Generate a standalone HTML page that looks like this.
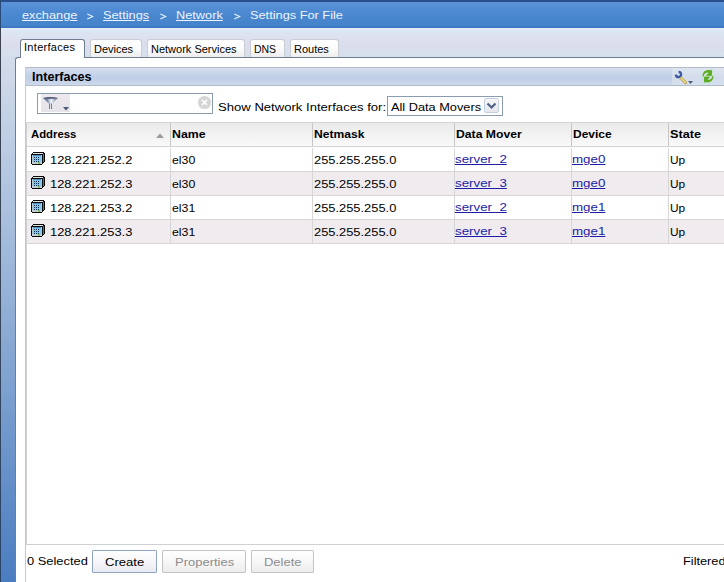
<!DOCTYPE html>
<html><head><meta charset="utf-8">
<style>
*{margin:0;padding:0;box-sizing:border-box}
html,body{width:724px;height:582px;overflow:hidden}
body{position:relative;font-family:"Liberation Sans",sans-serif;font-size:11px;color:#000;
 background:linear-gradient(to bottom,#e4ecf8 28px,#dce5f3 32px,#dcdded 44px,#d6e0ec 55px,#d2dcea 60px,#4a7dc0 582px)}
.abs{position:absolute}
.t{position:absolute;white-space:nowrap;line-height:14px}
.v{font-size:11px;transform-origin:0 0}
#lb{left:0;top:0;width:1px;height:582px;background:linear-gradient(to bottom,#2a4a78 0,#2a4a78 28px,#3c4250 28px,#38465a 300px,#2a4468 582px)}
#hdr{left:1px;top:0;width:723px;height:28px;background:linear-gradient(to bottom,#2a4f8c 0,#2a4f8c 2px,#5b93d9 2px,#4a88d0 14px,#4482ca 26px,#3d76bd 27px,#3d76bd 28px)}
.bc{color:#eef4ff}
.bc u{text-decoration:underline}
.tab{position:absolute;top:39px;height:19px;border:1px solid #c9cdd4;border-bottom:none;border-radius:3px 3px 0 0;
 background:linear-gradient(to bottom,#ffffff 0,#fbfbfb 50%,#ececec 100%);}
.tab span{position:absolute;left:3px;top:2px;line-height:14px;white-space:nowrap}
#outer{left:15px;top:57px;width:720px;height:540px;background:#fff;border:1px solid #6f7d90;border-right:none;border-bottom:none;border-top-left-radius:3px}
#acttab{left:20px;top:39px;width:65px;height:18px;background:#fff;border:1px solid #6f7d90;border-bottom:none;border-radius:3px 3px 0 0}
#panel{left:25px;top:67px;width:710px;height:530px;border-left:1px solid #c2c8ce;background:#fff}
#ph{left:25px;top:67px;width:699px;height:19px;border-top:1px solid #b3bdca;border-bottom:1px solid #b0bbca;border-left:1px solid #c6cfdc;border-top-left-radius:2px;
 background:linear-gradient(to bottom,#d6deed 0,#bfcfe7 55%,#c9d5ea 90%,#d0daec 100%)}
#tb{left:672px;top:68px;width:52px;height:17px;background:linear-gradient(to bottom,#dfe5f0 0,#d3dcec 55%,#d6dfee 100%)}
#grid{left:26px;top:122px;width:698px;height:423px;border-left:1px solid #d0d0d0;border-top:1px solid #d4d4d4;border-bottom:1px solid #d0d0d0}
#gh{left:27px;top:123px;width:697px;height:24px;background:linear-gradient(to bottom,#eaeaea 0,#f2f2f2 50%,#f9f9f9 100%);border-bottom:1px solid #d2d2d2}
.hs{position:absolute;top:123px;width:1px;height:23px;background:#c6c6c6}
.rs{position:absolute;width:1px;background:#d6d6d6}
.row{position:absolute;left:27px;width:697px;height:24px;border-bottom:1px solid #d6d6d6}
.alt{background:#efebef}
.hd{font-weight:bold;font-size:11px}
a{color:#1c1ca6;text-decoration:underline}
.btn{position:absolute;top:550px;height:23px;border:1px solid #8ea4bf;border-radius:1px;background:linear-gradient(to bottom,#ffffff 0,#f6f6fa 50%,#e9e9f1 100%)}
.btn.dis{border-color:#c4c4c4;background:linear-gradient(to bottom,#ffffff 0,#f7f7f7 50%,#ededed 100%)}
.btn.dis .t{color:#8d8d8d}
</style></head><body>
<div id="lb" class="abs"></div>
<div id="hdr" class="abs"></div>
<div class="t v" style="left:22px;top:8px;transform:scaleX(1.16);color:#eef4ff"><u>exchange</u></div>
<svg class="abs" style="left:87px;top:13px" width="7" height="7" viewBox="0 0 7 7"><path d="M0.3 1 L5.8 3.5 L0.3 6" fill="none" stroke="#eaf4ff" stroke-width="1.2"/></svg>
<div class="t v" style="left:103px;top:8px;transform:scaleX(1.16);color:#eef4ff"><u>Settings</u></div>
<svg class="abs" style="left:160px;top:13px" width="7" height="7" viewBox="0 0 7 7"><path d="M0.3 1 L5.8 3.5 L0.3 6" fill="none" stroke="#eaf4ff" stroke-width="1.2"/></svg>
<div class="t v" style="left:176px;top:8px;transform:scaleX(1.16);color:#eef4ff"><u>Network</u></div>
<svg class="abs" style="left:234px;top:13px" width="7" height="7" viewBox="0 0 7 7"><path d="M0.3 1 L5.8 3.5 L0.3 6" fill="none" stroke="#eaf4ff" stroke-width="1.2"/></svg>
<div class="t v" style="left:250px;top:8px;transform:scaleX(1.16);color:#eef4ff">Settings For File</div>
<div class="tab" style="left:90px;width:52px"><span style="transform:scaleX(1);transform-origin:0 0">Devices</span></div>
<div class="tab" style="left:147px;width:98px"><span style="transform:scaleX(1);transform-origin:0 0">Network Services</span></div>
<div class="tab" style="left:250px;width:35px"><span style="transform:scaleX(0.95);transform-origin:0 0">DNS</span></div>
<div class="tab" style="left:290px;width:49px"><span style="transform:scaleX(1);transform-origin:0 0">Routes</span></div>
<div id="outer" class="abs"></div>
<div id="acttab" class="abs"></div>
<div class="abs" style="left:21px;top:56px;width:63px;height:2px;background:#fff"></div>
<div class="t" style="left:24px;top:40px;letter-spacing:0.3px">Interfaces</div>
<div id="panel" class="abs"></div>
<div id="ph" class="abs"></div>
<div id="tb" class="abs"></div>
<div class="t" style="left:32px;top:70px;font-weight:bold;font-size:12px;transform:scaleX(1.05);transform-origin:0 0">Interfaces</div>
<svg class="abs" style="left:673px;top:68px" width="22" height="18" viewBox="0 0 22 18">
<path d="M2.9 6.6 A2.6 2.6 0 1 0 5.6 3.9" fill="none" stroke="#3d5ba2" stroke-width="2.3"/>
<path d="M8.2 10.2 L12.6 14.6" stroke="#b09a58" stroke-width="3" stroke-linecap="round"/>
<path d="M8.2 10.2 L12.6 14.6" stroke="#f2d472" stroke-width="1.7" stroke-linecap="round"/>
<path d="M15 13 L20 13 L17.5 16 Z" fill="#4c5f82"/>
</svg>
<svg class="abs" style="left:698px;top:66px" width="20" height="20" viewBox="0 0 20 20">
<g fill="#5aaa22" stroke="#b4e49a" stroke-width="0.9" stroke-opacity="0.8" paint-order="stroke"><path d="M4.66 10.57 L4.59 9.75 L4.65 8.92 L4.84 8.10 L5.15 7.30 L5.59 6.55 L6.14 5.87 L6.80 5.27 L7.55 4.78 L8.38 4.40 L9.27 4.14 L10.20 4.03 L11.15 4.06 L12.09 4.23 L13.00 4.55 L11.60 7.20 L11.15 6.92 L10.65 6.71 L10.12 6.58 L9.56 6.53 L8.99 6.56 L8.42 6.69 L7.86 6.91 L7.34 7.21 L6.86 7.60 L6.44 8.07 L6.09 8.61 L5.82 9.20 L5.64 9.84 L5.56 10.51 Z M13.90 3.50 L13.90 9.70 L7.90 9.70 Z"/><path d="M15.34 9.83 L15.41 10.65 L15.35 11.48 L15.16 12.30 L14.85 13.10 L14.41 13.85 L13.86 14.53 L13.20 15.13 L12.45 15.62 L11.62 16.00 L10.73 16.26 L9.80 16.37 L8.85 16.34 L7.91 16.17 L7.00 15.85 L8.40 13.20 L8.85 13.48 L9.35 13.69 L9.88 13.82 L10.44 13.87 L11.01 13.84 L11.58 13.71 L12.14 13.49 L12.66 13.19 L13.14 12.80 L13.56 12.33 L13.91 11.79 L14.18 11.20 L14.36 10.56 L14.44 9.89 Z M6.10 16.90 L6.10 10.70 L12.10 10.70 Z"/></g>
</svg>
<div class="abs" style="left:37px;top:93px;width:176px;height:21px;border:1px solid #8b9cae;background:#fff"></div>
<div class="abs" style="left:41px;top:94px;width:29px;height:18px;background:linear-gradient(to bottom,#ebe9ed,#e6e4e8)"></div>
<svg class="abs" style="left:42px;top:96px" width="18" height="14" viewBox="0 0 18 14">
 <defs><linearGradient id="fg" x1="0" x2="1"><stop offset="0" stop-color="#4a5a80"/><stop offset="0.3" stop-color="#8090b0"/><stop offset="0.55" stop-color="#f4f6fc"/><stop offset="0.85" stop-color="#8c98b0"/><stop offset="1" stop-color="#5a6684"/></linearGradient></defs>
 <path d="M1 1.8 L16 1.8 L10.2 7.8 L6.8 7.8 Z" fill="url(#fg)"/>
 <path d="M1 2.2 Q8.5 -0.4 16 2.2 Q8.5 3.4 1 2.2 Z" fill="#4c5474"/>
 <rect x="7" y="7.5" width="3" height="5.5" fill="#dfe3ea"/>
 <path d="M7.5 7.5 L7.5 13 M9.5 7.5 L9.5 13" stroke="#727e90" stroke-width="1"/>
</svg>
<svg class="abs" style="left:63px;top:107px" width="6" height="4" viewBox="0 0 6 4"><path d="M0 0 L6 0 L3 3.5 Z" fill="#4a5a7a"/></svg>
<svg class="abs" style="left:197px;top:95px" width="15" height="15" viewBox="0 0 15 15"><circle cx="7.5" cy="7.5" r="6.6" fill="#d6d6d6"/><path d="M5 5 L10 10 M10 5 L5 10" stroke="#fff" stroke-width="1.6"/></svg>
<div class="t v" style="left:218px;top:100px;transform:scaleX(1.19);">Show Network Interfaces for:</div>
<div class="abs" style="left:387px;top:96px;width:116px;height:20px;border:1px solid #8b9cae;background:#fff"></div>
<div class="t v" style="left:391px;top:100px;transform:scaleX(1.16);">All Data Movers</div>
<div class="abs" style="left:484px;top:98px;width:15px;height:15px;border:1px solid #c1cfe0;border-radius:2px;background:linear-gradient(to bottom,#f7f7fb,#e6e6ee)"></div>
<svg class="abs" style="left:486px;top:102px" width="11" height="8" viewBox="0 0 11 8"><path d="M1.5 1.5 L5.5 5.5 L9.5 1.5" stroke="#4d6185" stroke-width="2.2" fill="none"/></svg>
<div id="grid" class="abs"></div>
<div id="gh" class="abs"></div>
<div class="hs" style="left:170px"></div>
<div class="hs" style="left:312px"></div>
<div class="hs" style="left:454px"></div>
<div class="hs" style="left:571px"></div>
<div class="hs" style="left:668px"></div>
<div class="t hd" style="left:31px;top:127px;transform:scaleX(1.03);transform-origin:0 0">Address</div>
<div class="t hd" style="left:172px;top:127px;transform:scaleX(1.12);transform-origin:0 0">Name</div>
<div class="t hd" style="left:314px;top:127px;transform:scaleX(1.1);transform-origin:0 0">Netmask</div>
<div class="t hd" style="left:456px;top:127px;transform:scaleX(1.11);transform-origin:0 0">Data Mover</div>
<div class="t hd" style="left:573px;top:127px;transform:scaleX(1.09);transform-origin:0 0">Device</div>
<div class="t hd" style="left:670px;top:127px;transform:scaleX(1.15);transform-origin:0 0">State</div>
<svg class="abs" style="left:156px;top:133px" width="8" height="5" viewBox="0 0 8 5"><path d="M0 5 L4 0.5 L8 5 Z" fill="#9a9a9a"/></svg>
<svg width="0" height="0" style="position:absolute"><defs><symbol id="ico" viewBox="0 0 16 16" shape-rendering="crispEdges">
<rect x="3" y="2" width="11" height="1" fill="#0a0a0a"/>
<rect x="2" y="3" width="1" height="1" fill="#0a0a0a"/>
<rect x="3" y="3" width="10" height="1" fill="#e4e4e4"/>
<rect x="13" y="3" width="2" height="1" fill="#0a0a0a"/>
<rect x="1" y="4" width="12" height="1" fill="#0a0a0a"/>
<rect x="1" y="4" width="1" height="10" fill="#0a0a0a"/>
<rect x="2" y="14" width="10" height="1" fill="#0a0a0a"/>
<rect x="12" y="4" width="1" height="10" fill="#0a0a0a"/>
<rect x="13" y="4" width="1" height="8" fill="#6c6c6c"/>
<rect x="14" y="3" width="1" height="9" fill="#0a0a0a"/>
<rect x="13" y="12" width="1" height="1" fill="#0a0a0a"/>
<rect x="2" y="5" width="10" height="9" fill="#b4c8d4"/>
<rect x="3" y="5" width="8" height="7" fill="#86c4e8"/>
<rect x="3" y="5" width="8" height="1" fill="#4a8cc0"/>
<g fill="#0b2d4e"><rect x="4" y="7" width="1" height="1"/><rect x="6" y="7" width="1" height="1"/><rect x="8" y="7" width="1" height="1"/>
<rect x="4" y="9" width="1" height="1"/><rect x="6" y="9" width="1" height="1"/><rect x="8" y="9" width="1" height="1"/>
<rect x="4" y="11" width="1" height="1"/><rect x="6" y="11" width="1" height="1"/><rect x="8" y="11" width="1" height="1"/></g>
<rect x="2" y="12" width="10" height="2" fill="#c4ccd0"/>
<rect x="8" y="12" width="2" height="2" fill="#7cc46c"/>
</symbol></defs></svg>
<div class="row" style="top:148px"></div>
<div class="row alt" style="top:172px"></div>
<div class="row" style="top:196px"></div>
<div class="row alt" style="top:220px"></div>
<div class="rs" style="left:170px;top:148px;height:96px"></div>
<div class="rs" style="left:312px;top:148px;height:96px"></div>
<div class="rs" style="left:454px;top:148px;height:96px"></div>
<div class="rs" style="left:571px;top:148px;height:96px"></div>
<div class="rs" style="left:668px;top:148px;height:96px"></div>
<svg class="abs" style="left:30px;top:150px" width="16" height="16"><use href="#ico"/></svg>
<div class="t v" style="left:50px;top:153px;transform:scaleX(1.17);">128.221.252.2</div>
<div class="t v" style="left:172px;top:153px;transform:scaleX(1.12);">el30</div>
<div class="t v" style="left:314px;top:153px;transform:scaleX(1.17);">255.255.255.0</div>
<div class="t v" style="left:455px;top:152px;transform:scaleX(1.21);"><a>server_2</a></div>
<div class="t v" style="left:572px;top:152px;transform:scaleX(1.21);"><a>mge0</a></div>
<div class="t v" style="left:670px;top:153px;transform:scaleX(1.08);">Up</div>
<svg class="abs" style="left:30px;top:174px" width="16" height="16"><use href="#ico"/></svg>
<div class="t v" style="left:50px;top:177px;transform:scaleX(1.17);">128.221.252.3</div>
<div class="t v" style="left:172px;top:177px;transform:scaleX(1.12);">el30</div>
<div class="t v" style="left:314px;top:177px;transform:scaleX(1.17);">255.255.255.0</div>
<div class="t v" style="left:455px;top:176px;transform:scaleX(1.21);"><a>server_3</a></div>
<div class="t v" style="left:572px;top:176px;transform:scaleX(1.21);"><a>mge0</a></div>
<div class="t v" style="left:670px;top:177px;transform:scaleX(1.08);">Up</div>
<svg class="abs" style="left:30px;top:198px" width="16" height="16"><use href="#ico"/></svg>
<div class="t v" style="left:50px;top:201px;transform:scaleX(1.17);">128.221.253.2</div>
<div class="t v" style="left:172px;top:201px;transform:scaleX(1.12);">el31</div>
<div class="t v" style="left:314px;top:201px;transform:scaleX(1.17);">255.255.255.0</div>
<div class="t v" style="left:455px;top:200px;transform:scaleX(1.21);"><a>server_2</a></div>
<div class="t v" style="left:572px;top:200px;transform:scaleX(1.21);"><a>mge1</a></div>
<div class="t v" style="left:670px;top:201px;transform:scaleX(1.08);">Up</div>
<svg class="abs" style="left:30px;top:222px" width="16" height="16"><use href="#ico"/></svg>
<div class="t v" style="left:50px;top:225px;transform:scaleX(1.17);">128.221.253.3</div>
<div class="t v" style="left:172px;top:225px;transform:scaleX(1.12);">el31</div>
<div class="t v" style="left:314px;top:225px;transform:scaleX(1.17);">255.255.255.0</div>
<div class="t v" style="left:455px;top:224px;transform:scaleX(1.21);"><a>server_3</a></div>
<div class="t v" style="left:572px;top:224px;transform:scaleX(1.21);"><a>mge1</a></div>
<div class="t v" style="left:670px;top:225px;transform:scaleX(1.08);">Up</div>
<div class="t v" style="left:27px;top:554px;transform:scaleX(1.17);">0 Selected</div>
<div class="btn" style="left:92px;width:65px"></div>
<div class="t v" style="left:105px;top:555px;transform:scaleX(1.19);">Create</div>
<div class="btn dis" style="left:162px;width:84px"></div>
<div class="t v" style="left:175px;top:555px;transform:scaleX(1.18);color:#8d8d8d">Properties</div>
<div class="btn dis" style="left:251px;width:63px"></div>
<div class="t v" style="left:264px;top:555px;transform:scaleX(1.18);color:#8d8d8d">Delete</div>
<div class="t v" style="left:683px;top:554px;transform:scaleX(1.16);">Filtered</div>
</body></html>
